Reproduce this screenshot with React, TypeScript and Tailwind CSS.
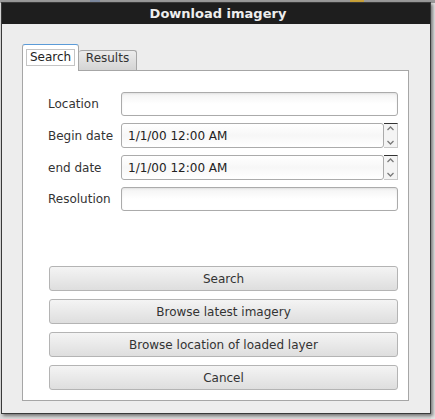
import React from 'react';

const font = { fontFamily: '"DejaVu Sans", "Liberation Sans", sans-serif' };

function TextField() {
  return (
    <div className="h-[24px] flex-1 rounded-[3px] border border-[#ababab] bg-gradient-to-b from-[#f3f3f3] via-white to-white shadow-[inset_0_1px_2px_rgba(0,0,0,0.08)]" />
  );
}

function DateField() {
  return (
    <div className="flex h-[25px] flex-1">
      <div className="flex flex-1 items-center rounded-[3px] border border-[#ababab] bg-gradient-to-b from-white via-[#f7f7f7] to-white pl-[6px] text-[12px] text-[#222]">
        1/1/00 12:00 AM
      </div>
      <div className="flex w-[14px] flex-col items-center justify-between border border-l-0 border-[#c8c8c8] border-t-[#333] bg-[#f4f4f4] py-[1px]">
        <svg width="9" height="7" viewBox="0 0 9 7">
          <path d="M1.5 5 L4.5 2 L7.5 5" fill="none" stroke="#7a7a7a" strokeWidth="1.3" />
        </svg>
        <svg width="9" height="7" viewBox="0 0 9 7">
          <path d="M1.5 2 L4.5 5 L7.5 2" fill="none" stroke="#7a7a7a" strokeWidth="1.3" />
        </svg>
      </div>
    </div>
  );
}

function Button({ label }: { label: string }) {
  return (
    <button className="flex h-[25px] w-full items-center justify-center rounded-[3px] border border-[#b4b4b4] bg-gradient-to-b from-[#f4f4f4] to-[#dedede] text-[12px] text-[#333]">
      {label}
    </button>
  );
}

export default function App() {
  return (
    <div className="relative h-[419px] w-[435px] overflow-hidden bg-[#d9d9d9]" style={font}>
      {/* desktop strip behind */}
      <div className="absolute left-0 top-0 h-[3px] w-full bg-[#9a9a9a]" />
      <div className="absolute left-[90px] top-0 h-[2px] w-[10px] bg-[#7d8aa0]" />
      <div className="absolute left-[350px] top-0 h-[2px] w-[14px] bg-[#c9a23a]" />
      <div className="absolute right-0 top-[3px] h-[416px] w-[4px] bg-[#e4e4e4]" />

      <div className="absolute left-[1px] top-[2px] flex h-[412px] w-[430px] flex-col border border-[#3a3a3a] bg-[#ededed] shadow-[2px_2px_3px_rgba(0,0,0,0.45)]">
        <div className="flex h-[21px] items-center justify-center bg-[#1e1e1e] pl-[4px] text-[13px] font-bold text-[#eeeeee]">
          Download imagery
        </div>

        <div className="flex flex-1 flex-col pl-[20px] pr-[21px] pt-[20px] pb-[12px]">
          <div className="flex items-end">
            <div className="relative z-10 -mb-px flex h-[27px] w-[57px] items-start justify-center rounded-t-[3px] border border-b-0 border-[#a6a6a6] border-t-[#5b9bd8] bg-white pt-[4px]">
              <div className="border border-[#c4c4c4] px-[3px] text-[12px] leading-[15px] text-[#222]">Search</div>
            </div>
            <div className="flex h-[20px] w-[58px] items-start justify-center rounded-t-[3px] border border-b-0 border-l-0 border-[#a6a6a6] bg-gradient-to-b from-[#ececec] to-[#d4d4d4] text-[12px] leading-[15px] text-[#333]">
              Results
            </div>
          </div>

          <div className="flex flex-1 flex-col border border-[#a6a6a6] bg-white pl-[25px] pr-[10px] pt-[21px] pb-[10px]">
            <div className="flex flex-col gap-[7px]">
              <div className="flex items-center">
                <span className="w-[73px] text-[12px] text-[#333]">Location</span>
                <TextField />
              </div>
              <div className="flex items-center">
                <span className="w-[73px] text-[12px] text-[#333]">Begin date</span>
                <DateField />
              </div>
              <div className="flex items-center">
                <span className="w-[73px] text-[12px] text-[#333]">end date</span>
                <DateField />
              </div>
              <div className="flex items-center">
                <span className="w-[73px] text-[12px] text-[#333]">Resolution</span>
                <TextField />
              </div>
            </div>

            <div className="mt-auto flex flex-col gap-[8px] pl-px">
              <Button label="Search" />
              <Button label="Browse latest imagery" />
              <Button label="Browse location of loaded layer" />
              <Button label="Cancel" />
            </div>
          </div>
        </div>
      </div>
    </div>
  );
}
